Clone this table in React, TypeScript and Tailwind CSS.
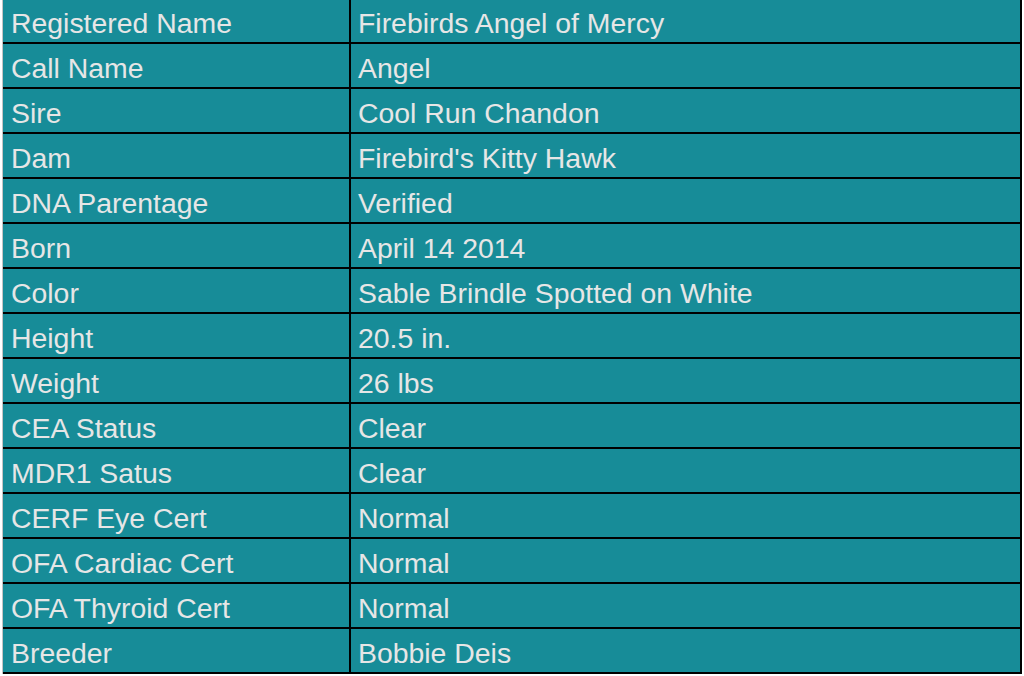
import React from 'react';

const rows: [string, string][] = [
  ['Registered Name', 'Firebirds Angel of Mercy'],
  ['Call Name', 'Angel'],
  ['Sire', 'Cool Run Chandon'],
  ['Dam', "Firebird's Kitty Hawk"],
  ['DNA Parentage', 'Verified'],
  ['Born', 'April 14 2014'],
  ['Color', 'Sable Brindle Spotted on White'],
  ['Height', '20.5 in.'],
  ['Weight', '26 lbs'],
  ['CEA Status', 'Clear'],
  ['MDR1 Satus', 'Clear'],
  ['CERF Eye Cert', 'Normal'],
  ['OFA Cardiac Cert', 'Normal'],
  ['OFA Thyroid Cert', 'Normal'],
  ['Breeder', 'Bobbie Deis'],
];

export default function App() {
  return (
    <div className="w-[1024px] h-[676px] overflow-hidden bg-white pl-[2px] font-['Liberation_Sans',Arial,sans-serif]">
      <div className="-mt-[3px] w-[1020px] border-l border-r-2 border-t-2 border-l-[#c4c4c4] border-r-black border-t-black bg-[#178c98] text-[28.4px] leading-none text-[#e6e6e6]">
        {rows.map(([label, value]) => (
          <div key={label} className="flex h-[45px] border-b-2 border-black">
            <div className="flex w-[348px] items-center border-r-2 border-black pl-[8px] pt-[5px]">{label}</div>
            <div className="flex flex-1 items-center pl-[7px] pt-[5px]">{value}</div>
          </div>
        ))}
      </div>
    </div>
  );
}
